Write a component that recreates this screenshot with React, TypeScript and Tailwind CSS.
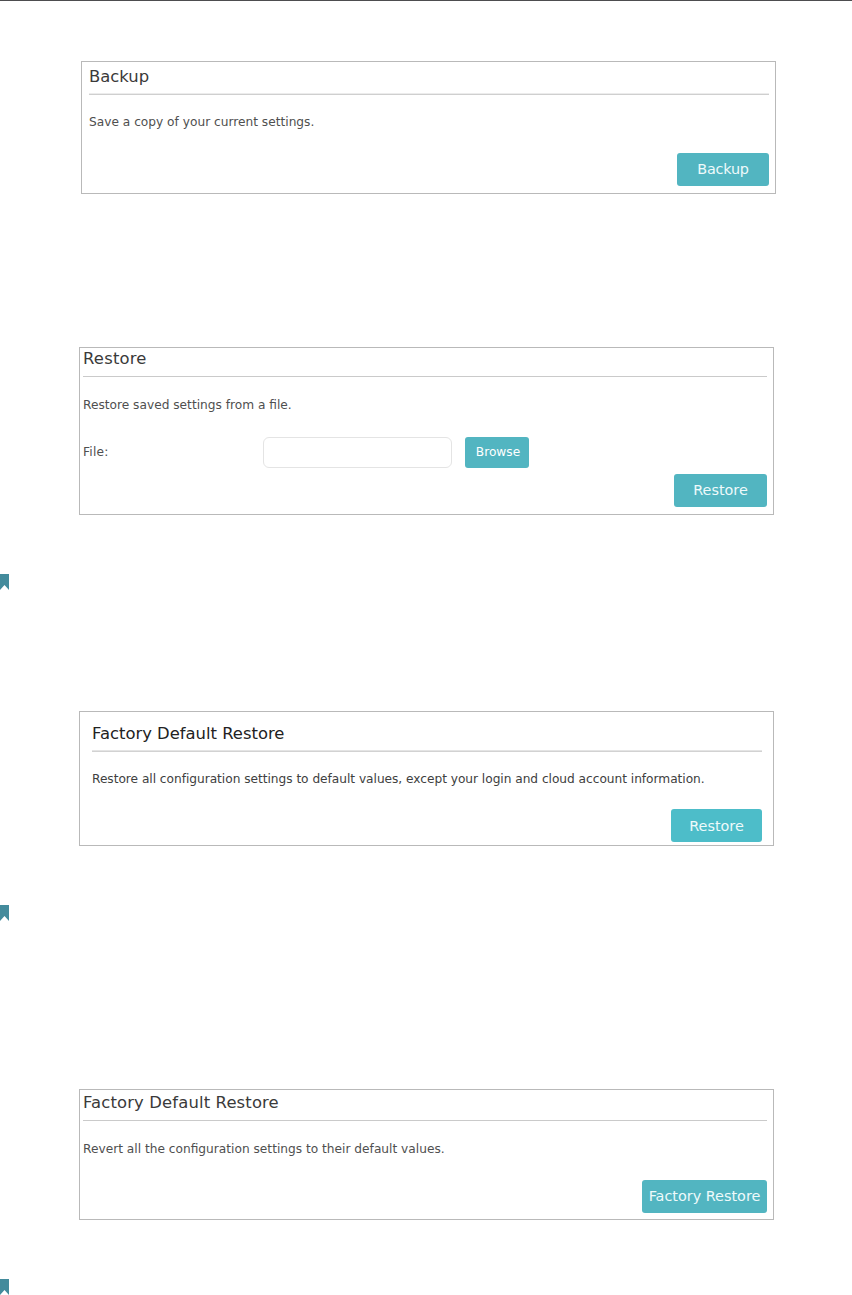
import type { ReactNode } from "react";
import { clsx } from "clsx";

function Panel({ className, children }: { className?: string; children: ReactNode }) {
  return (
    <section className={clsx("flex w-[695px] flex-col border border-[#b9b9b9] bg-white", className)}>
      {children}
    </section>
  );
}

function PanelTitle({ className, children }: { className?: string; children: ReactNode }) {
  return <h2 className={clsx("font-['DejaVu_Sans',sans-serif] text-[16.4px]", className)}>{children}</h2>;
}

function ActionButton({ className, children }: { className?: string; children: ReactNode }) {
  return (
    <button
      type="button"
      className={clsx(
        "flex items-center justify-center self-end rounded-[3px] font-['DejaVu_Sans',sans-serif] text-[14.4px] whitespace-nowrap text-[#eefafb]",
        className,
      )}
    >
      {children}
    </button>
  );
}

function Bookmark({ className }: { className?: string }) {
  return (
    <svg className={clsx("block h-4 w-[9px]", className)} viewBox="0 0 9 16" fill="#438b9c">
      <path d="M0 0H9V16L4.5 11L0 16Z" />
    </svg>
  );
}

export default function App() {
  return (
    <main className="h-[1295px] overflow-hidden border-t border-[#4d4d4f] bg-white font-['DejaVu_Sans',sans-serif] text-[12.2px] text-[#4f4f4f]">
      <Panel className="mt-[60px] ml-[81px] h-[133px] pr-[6px] pl-[7px]">
        <PanelTitle className="h-[31px] leading-[30px] text-[#3a3a3a]">Backup</PanelTitle>
        <hr className="h-[2px] border-t border-b border-t-[#ececec] border-b-[#cfcfcf]" />
        <p className="mt-[17px] leading-5">Save a copy of your current settings.</p>
        <ActionButton className="mt-[21px] h-[33px] w-[92px] bg-[#52b5c1] tracking-[-0.2px]">Backup</ActionButton>
      </Panel>

      <Panel className="mt-[153px] ml-[79px] h-[168px] pr-[6px] pl-[3px]">
        <PanelTitle className="h-7 leading-[22px] tracking-[0.2px] text-[#3a3a3a]">Restore</PanelTitle>
        <hr className="border-[#cacaca]" />
        <p className="mt-[18px] leading-5">Restore saved settings from a file.</p>
        <div className="mt-[21px] flex h-8 items-center">
          <label htmlFor="file" className="w-[180px] tracking-[0.2px]">File:</label>
          <input id="file" type="text" className="h-[31px] w-[189px] rounded-[6px] border border-[#e4e4e4]" />
          <button type="button" className="ml-[13px] h-[31px] w-16 rounded-[3px] bg-[#52b5c1] pl-[2px] text-white">
            Browse
          </button>
        </div>
        <ActionButton className="mt-[6px] h-[33px] w-[93px] bg-[#52b5c1]">Restore</ActionButton>
      </Panel>

      <Bookmark className="mt-[59px]" />

      <Panel className="mt-[121px] ml-[79px] h-[135px] pr-[11px] pl-3">
        <PanelTitle className="h-[38px] pt-3 leading-5 text-[#222]">Factory Default Restore</PanelTitle>
        <hr className="h-[2px] border-t border-b border-t-[#e4e4e4] border-b-[#d2d2d2]" />
        <p className="mt-[17px] leading-5 tracking-[-0.03px] whitespace-nowrap text-[#404040]">
          Restore all configuration settings to default values, except your login and cloud account information.
        </p>
        <ActionButton className="mt-5 h-[33px] w-[91px] bg-[#4dbdc9] pt-[2px]">Restore</ActionButton>
      </Panel>

      <Bookmark className="mt-[59px]" />

      <Panel className="mt-[168px] ml-[79px] h-[131px] pr-[6px] pl-[3px]">
        <PanelTitle className="h-[30px] pt-[3px] leading-5 tracking-[0.15px] text-[#3a3a3a]">
          Factory Default Restore
        </PanelTitle>
        <hr className="border-[#cacaca]" />
        <p className="mt-[18px] leading-5">Revert all the configuration settings to their default values.</p>
        <ActionButton className="mt-[21px] h-[33px] w-[125px] bg-[#52b5c1]">Factory Restore</ActionButton>
      </Panel>

      <Bookmark className="mt-[59px]" />
    </main>
  );
}
